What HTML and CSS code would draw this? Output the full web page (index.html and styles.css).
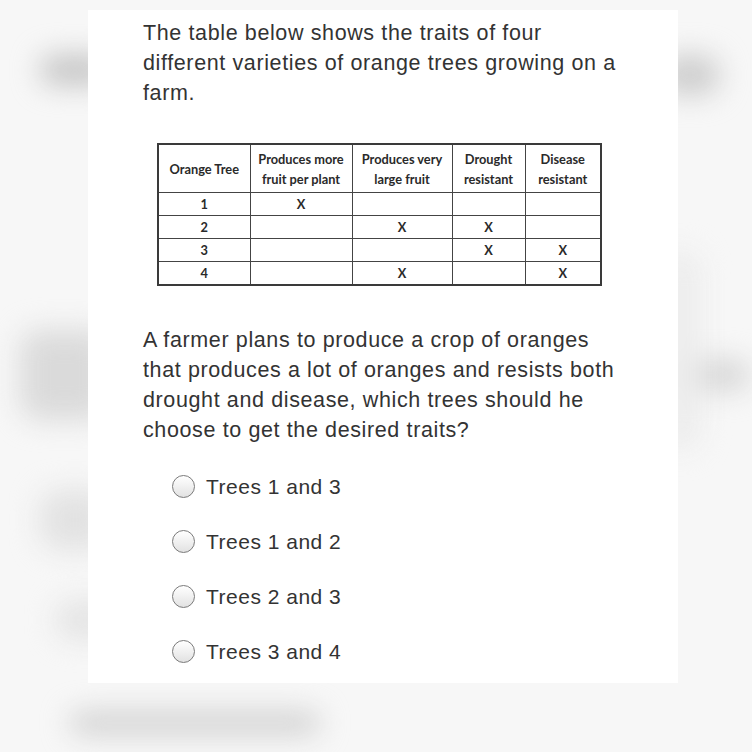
FILE: index.html
```html
<!DOCTYPE html>
<html>
<head>
<meta charset="utf-8">
<link rel="stylesheet" href="styles.css">
</head>
<body>
<div class="page">
  <div class="blur b1"></div>
  <div class="blur b2"></div>
  <div class="blur b3"></div>
  <div class="blur b4"></div>
  <div class="blur b5"></div>
  <div class="blur b6"></div>
  <div class="blur b7"></div>
  <div class="blur b8"></div>
  <div class="card">
    <p class="q">The table below shows the traits of four different varieties of orange trees growing on a farm.</p>
    <table class="traits">
      <colgroup>
        <col class="c1"><col class="c2"><col class="c3"><col class="c4"><col class="c5">
      </colgroup>
      <thead>
        <tr>
          <th>Orange Tree</th>
          <th>Produces more<br>fruit per plant</th>
          <th>Produces very<br>large fruit</th>
          <th>Drought<br>resistant</th>
          <th>Disease<br>resistant</th>
        </tr>
      </thead>
      <tbody>
        <tr><td>1</td><td>X</td><td></td><td></td><td></td></tr>
        <tr><td>2</td><td></td><td>X</td><td>X</td><td></td></tr>
        <tr><td>3</td><td></td><td></td><td>X</td><td>X</td></tr>
        <tr><td>4</td><td></td><td>X</td><td></td><td>X</td></tr>
      </tbody>
    </table>
    <p class="q q2">A farmer plans to produce a crop of oranges that produces a lot of oranges and resists both drought and disease, which trees should he choose to get the desired traits?</p>
    <ul class="options">
      <li class="opt"><span class="radio"></span><span>Trees 1 and 3</span></li>
      <li class="opt"><span class="radio"></span><span>Trees 1 and 2</span></li>
      <li class="opt"><span class="radio"></span><span>Trees 2 and 3</span></li>
      <li class="opt"><span class="radio"></span><span>Trees 3 and 4</span></li>
    </ul>
  </div>
</div>
</body>
</html>
```
FILE: styles.css
```css
html, body {
  margin: 0;
  padding: 0;
  background: #f7f7f7;
}
.page {
  position: relative;
  width: 752px;
  height: 752px;
  overflow: hidden;
  background: #f7f7f7;
}
.blur {
  position: absolute;
  background: #cfcfcf;
  filter: blur(14px);
  border-radius: 20px;
}
.b1 { left: 40px; top: 55px; width: 70px; height: 30px; background: #c4c4c4; }
.b2 { left: 20px; top: 330px; width: 90px; height: 90px; background: #dadada; }
.b3 { left: 40px; top: 490px; width: 70px; height: 60px; background: #e2e2e2; }
.b4 { left: 55px; top: 600px; width: 60px; height: 40px; background: #e4e4e4; }
.b5 { left: 660px; top: 55px; width: 60px; height: 40px; background: #cdcdcd; }
.b6 { left: 670px; top: 360px; width: 80px; height: 30px; background: #d6d6d6; }
.b7 { left: 70px; top: 712px; width: 250px; height: 22px; background: #cfcfcf; }
.b8 { left: 660px; top: 250px; width: 40px; height: 200px; background: #ececec; }

.card {
  position: relative;
  margin: 10px 0 0 88px;
  width: 535px;
  height: 665px;
  padding: 8px 0 0 55px;
  background: #ffffff;
  font-family: "Liberation Sans", Arial, sans-serif;
  color: #333333;
}
.q {
  margin: 0;
  width: 482px;
  font-size: 21.5px;
  letter-spacing: 0.62px;
  line-height: 30px;
}
.q2 {
  margin-top: 39px;
}
.traits {
  margin: 35px 0 0 14px;
  border-collapse: collapse;
  border: 2px solid #3a3a3a;
  font-family: Lato, "Open Sans", sans-serif;
  font-weight: 700;
  font-size: 12.8px;
  color: #2a2a2a;
  text-align: center;
}
.c1 { width: 92px; }
.c2 { width: 102px; }
.c3 { width: 100px; }
.c4 { width: 73px; }
.c5 { width: 76px; }
.traits th, .traits td {
  border: 1px solid #444;
  padding: 0;
}
.traits th {
  height: 47px;
  line-height: 20px;
  font-weight: 700;
}
.traits td {
  height: 22px;
  line-height: 22px;
}
.options {
  list-style: none;
  margin: 14px 0 0 29px;
  padding: 0;
}
.opt {
  display: flex;
  align-items: center;
  gap: 11px;
  height: 55px;
  font-size: 21px;
  letter-spacing: 0.5px;
  color: #333;
}
.radio {
  width: 21px;
  height: 21px;
  border-radius: 50%;
  border: 1.5px solid #7a7a7a;
  background: linear-gradient(#ffffff, #e2e2e2);
  flex: none;
}
```
